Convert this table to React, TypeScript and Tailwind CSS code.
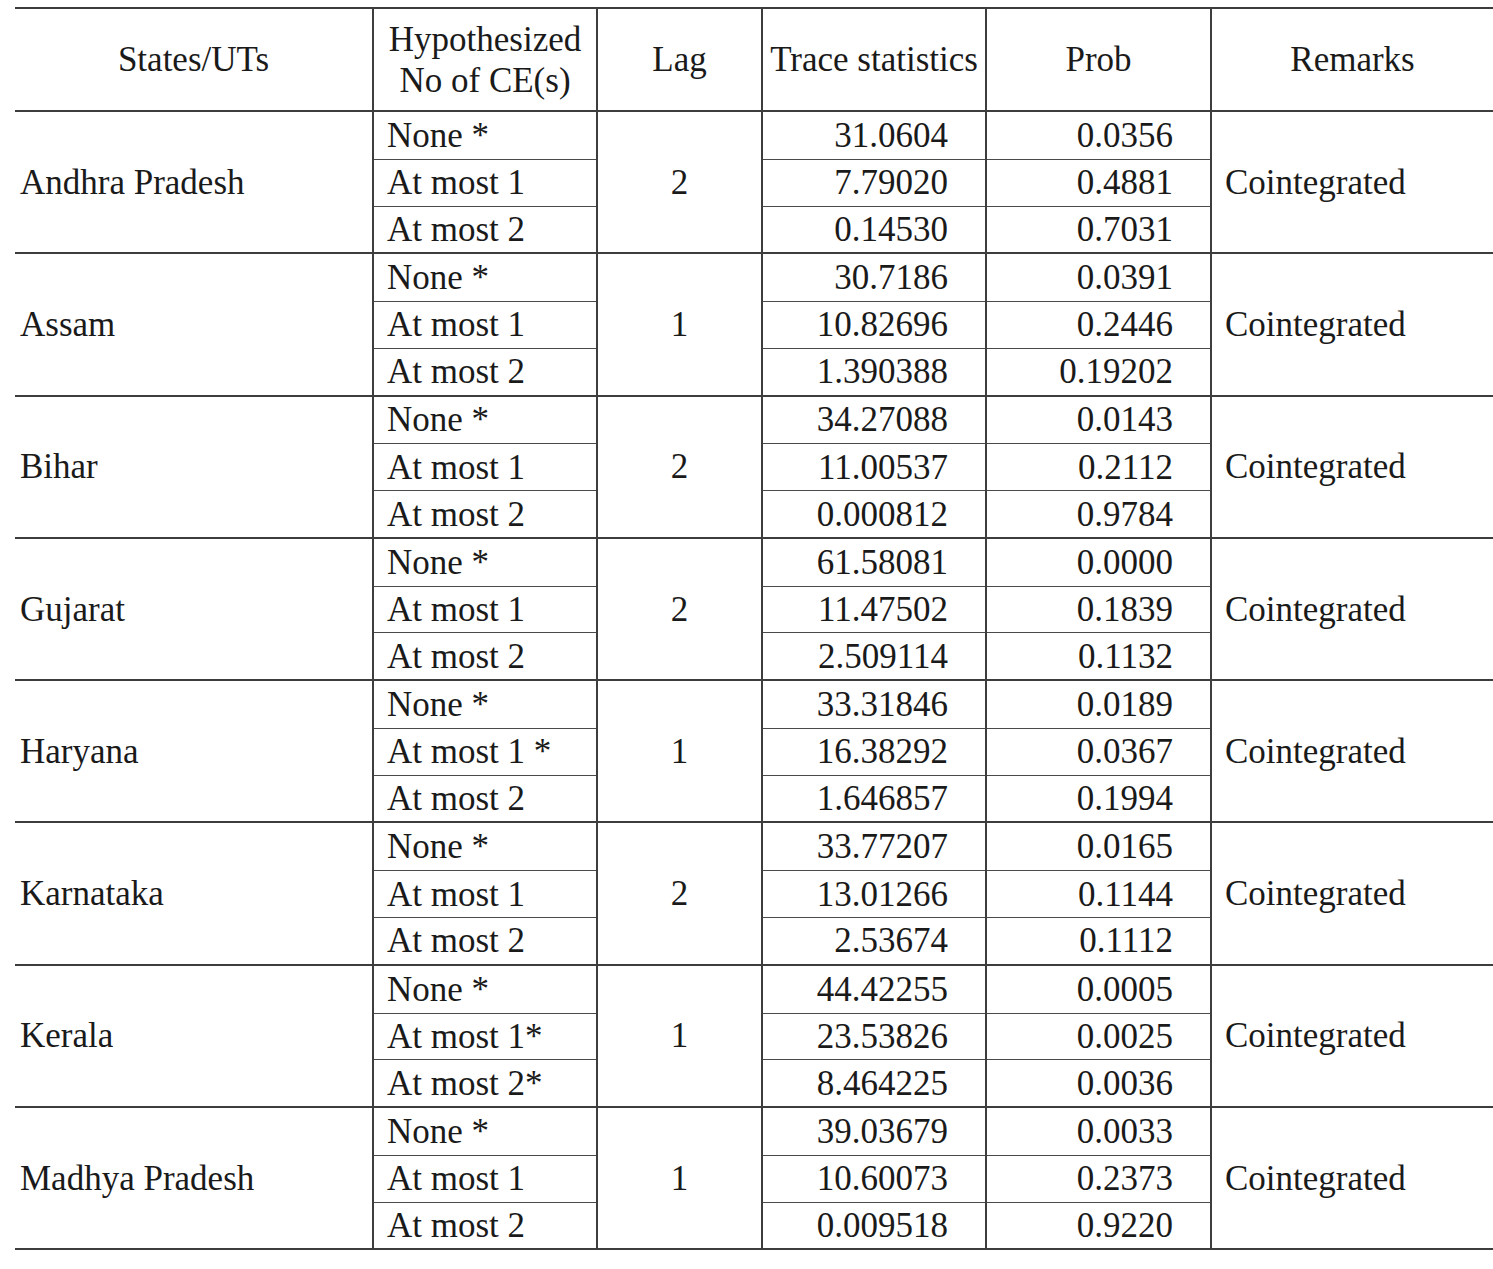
import React from "react";

type Group = {
  state: string;
  lag: string;
  hyp: string[];
  trace: string[];
  prob: string[];
};

const groups: Group[] = [
  { state: "Andhra Pradesh", lag: "2", hyp: ["None *", "At most 1", "At most 2"], trace: ["31.0604", "7.79020", "0.14530"], prob: ["0.0356", "0.4881", "0.7031"] },
  { state: "Assam", lag: "1", hyp: ["None *", "At most 1", "At most 2"], trace: ["30.7186", "10.82696", "1.390388"], prob: ["0.0391", "0.2446", "0.19202"] },
  { state: "Bihar", lag: "2", hyp: ["None *", "At most 1", "At most 2"], trace: ["34.27088", "11.00537", "0.000812"], prob: ["0.0143", "0.2112", "0.9784"] },
  { state: "Gujarat", lag: "2", hyp: ["None *", "At most 1", "At most 2"], trace: ["61.58081", "11.47502", "2.509114"], prob: ["0.0000", "0.1839", "0.1132"] },
  { state: "Haryana", lag: "1", hyp: ["None *", "At most 1 *", "At most 2"], trace: ["33.31846", "16.38292", "1.646857"], prob: ["0.0189", "0.0367", "0.1994"] },
  { state: "Karnataka", lag: "2", hyp: ["None *", "At most 1", "At most 2"], trace: ["33.77207", "13.01266", "2.53674"], prob: ["0.0165", "0.1144", "0.1112"] },
  { state: "Kerala", lag: "1", hyp: ["None *", "At most 1*", "At most 2*"], trace: ["44.42255", "23.53826", "8.464225"], prob: ["0.0005", "0.0025", "0.0036"] },
  { state: "Madhya Pradesh", lag: "1", hyp: ["None *", "At most 1", "At most 2"], trace: ["39.03679", "10.60073", "0.009518"], prob: ["0.0033", "0.2373", "0.9220"] },
];

const cols = "grid grid-cols-[357px_224px_165px_224px_225px_283px]";

const Stack: React.FC<{ items: string[]; align: "left" | "right" }> = ({ items, align }) => (
  <div className="flex flex-col border-l-2 border-[#3d3d3d]">
    {items.map((t, i) => (
      <div
        key={i}
        className={`h-[46.77px] flex items-center ${i > 0 ? "border-t border-[#4a4a4a]" : ""} ${
          align === "right" ? "justify-end pr-[37px]" : "justify-start pl-[13px]"
        }`}
      >
        {t}
      </div>
    ))}
  </div>
);

export default function App() {
  return (
    <div
      className="bg-white min-h-[1269px] pt-[7px] pl-[15px] text-[#1a1a1a] text-[35px] leading-none"
      style={{ fontFamily: '"Liberation Serif", "Times New Roman", serif' }}
    >
      <div className="w-[1478px] border-t-2 border-b-2 border-[#3d3d3d]">
        <div className={`${cols} h-[101px]`}>
          <div className="flex items-center justify-center">States/UTs</div>
          <div className="flex flex-col items-center justify-center border-l-2 border-[#3d3d3d] leading-[41px]">
            <span>Hypothesized</span>
            <span>No of CE(s)</span>
          </div>
          <div className="flex items-center justify-center border-l-2 border-[#3d3d3d]">Lag</div>
          <div className="flex items-center justify-center border-l-2 border-[#3d3d3d]">Trace statistics</div>
          <div className="flex items-center justify-center border-l-2 border-[#3d3d3d]">Prob</div>
          <div className="flex items-center justify-center border-l-2 border-[#3d3d3d]">Remarks</div>
        </div>
        {groups.map((g) => (
          <div key={g.state} className={`${cols} border-t-2 border-[#3d3d3d]`}>
            <div className="flex items-center pl-[5px]">{g.state}</div>
            <Stack items={g.hyp} align="left" />
            <div className="flex items-center justify-center border-l-2 border-[#3d3d3d]">{g.lag}</div>
            <Stack items={g.trace} align="right" />
            <Stack items={g.prob} align="right" />
            <div className="flex items-center pl-[13px] border-l-2 border-[#3d3d3d]">Cointegrated</div>
          </div>
        ))}
      </div>
    </div>
  );
}
